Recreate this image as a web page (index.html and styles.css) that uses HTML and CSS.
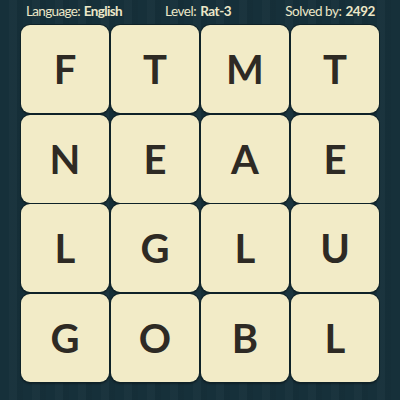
FILE: index.html
```html
<!DOCTYPE html>
<html>
<head>
<meta charset="utf-8">
<link rel="stylesheet" href="styles.css">
</head>
<body>
<div class="page">
  <div class="header">
    <div class="info info-lang"><span class="label">Language:</span> <span class="value">English</span></div>
    <div class="info info-level"><span class="label">Level:</span> <span class="value">Rat-3</span></div>
    <div class="info info-solved"><span class="label">Solved by:</span> <span class="value">2492</span></div>
  </div>
  <div class="grid">
    <div class="tile">F</div><div class="tile">T</div><div class="tile">M</div><div class="tile">T</div>
    <div class="tile">N</div><div class="tile">E</div><div class="tile">A</div><div class="tile">E</div>
    <div class="tile">L</div><div class="tile">G</div><div class="tile">L</div><div class="tile">U</div>
    <div class="tile">G</div><div class="tile">O</div><div class="tile">B</div><div class="tile">L</div>
  </div>
</div>
</body>
</html>
```
FILE: styles.css
```css
html, body {
  margin: 0;
  padding: 0;
}
body {
  width: 400px;
  height: 400px;
  overflow: hidden;
  background-color: #16303a;
  background-image: repeating-linear-gradient(90deg,
    rgba(255,255,255,0.00) 0px, rgba(255,255,255,0.00) 9px,
    rgba(255,255,255,0.02) 9px, rgba(255,255,255,0.02) 17px,
    rgba(0,0,0,0.035) 17px, rgba(0,0,0,0.035) 23px);
  font-family: "Lato", "Open Sans", sans-serif;
}
.page {
  display: flex;
  flex-direction: column;
}
.header {
  height: 25px;
  display: flex;
  align-items: center;
  color: #ece7c8;
  font-size: 13.5px;
  letter-spacing: -0.45px;
  line-height: 1;
  padding-bottom: 1px;
  box-sizing: border-box;
}
.info {
  white-space: nowrap;
}
.info-lang { margin-left: 26px; letter-spacing: -0.65px; }
.info-level { margin-left: 43px; }
.info-solved { margin-left: 54px; }
.label {
  font-weight: 400;
}
.value {
  font-weight: 700;
  margin-left: 1px;
}
.grid {
  margin-left: 21px;
  display: grid;
  grid-template-columns: repeat(4, 88px);
  grid-template-rows: repeat(4, 88px);
  column-gap: 2px;
  row-gap: 1.7px;
}
.tile {
  background: #f2ebc7;
  border-radius: 9px;
  box-shadow: 0 0 0 1px #0f2228, 0 2px 2px rgba(0,0,0,0.35);
  display: flex;
  align-items: center;
  justify-content: center;
  color: #2e2a24;
  font-family: "Lato", sans-serif;
  font-weight: 700;
  font-size: 40px;
  line-height: 1;
}
```
